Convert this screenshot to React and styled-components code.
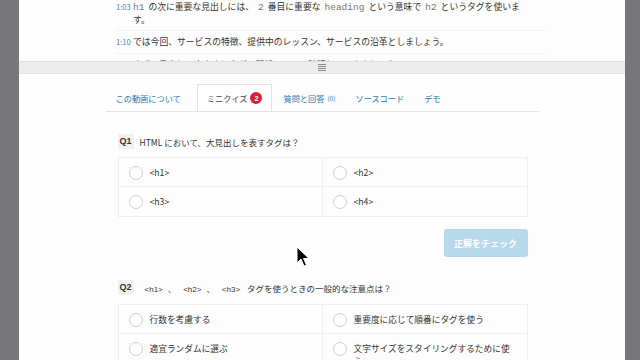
import React from 'react'
import styled, { createGlobalStyle } from 'styled-components'

const Global = createGlobalStyle`
  html, body { margin: 0; padding: 0; }
  body {
    background: #77777a;
    font-family: "Noto Sans CJK JP", "Noto Sans", sans-serif;
    color: #333;
    overflow: hidden;
  }
`

const Panel = styled.div`
  position: relative;
  margin: 0 15px 0 19px;
  height: 360px;
  background: #fdfdfd;
  overflow: hidden;
`

const Transcript = styled.ul`
  list-style: none;
  margin: 0;
  padding: 0 0 0 97px;
  height: 61px;
  overflow: hidden;
`

const Line = styled.li`
  display: flex;
  width: 430px;
  padding: 5px 0;
  margin-top: ${p => (p.$first ? '-4px' : '0')};
  border-bottom: 1px solid #f3f3f3;
  font-size: 8.8px;
  line-height: 11.5px;
  color: #333;
`

const Stamp = styled.span`
  flex: 0 0 17px;
  font-size: 7.5px;
  color: #3a84bd;
`

const Body = styled.span`
  width: 394px;
`

const Code = styled.code`
  font-family: "Liberation Mono", monospace;
  font-size: 9.5px;
  line-height: 11.5px;
  color: #777;
  margin: 0 ${p => (p.$tight ? '4px 0 0' : '4px')};
`

const Splitter = styled.div`
  height: 11px;
  background: #ececec;
  border-top: 1px solid #dedede;
  border-bottom: 1px solid #e4e4e4;
  display: flex;
  align-items: center;
  justify-content: center;
`

const Content = styled.div`
  width: 433px;
  margin: 10px auto 0;
`

const Tabs = styled.div`
  display: flex;
  border-bottom: 1px solid #e2e2e2;
  height: 27px;
`

const Tab = styled.div`
  display: flex;
  align-items: center;
  gap: 3px;
  padding: 0 9px;
  font-size: 8.2px;
  color: ${p => (p.$active ? '#444' : '#2a78b5')};
  background: ${p => (p.$active ? '#fff' : 'transparent')};
  border: 1px solid ${p => (p.$active ? '#e2e2e2' : 'transparent')};
  border-bottom: none;
  margin-bottom: -1px;
  height: 27px;
  box-sizing: border-box;
  margin-left: ${p => (p.$active ? '6px' : '0')};
  margin-right: ${p => (p.$active ? '1px' : '0')};
`

const Badge = styled.span`
  display: inline-flex;
  align-items: center;
  justify-content: center;
  width: 12px;
  height: 12px;
  border-radius: 50%;
  background: #d72236;
  color: #fff;
  font-size: 7.5px;
  font-weight: bold;
  font-family: "Liberation Sans", sans-serif;
`

const Count = styled.small`
  font-size: 6.5px;
`

const Quiz = styled.div`
  padding: 0 11px 0 12px;
`

const Question = styled.div`
  display: flex;
  align-items: center;
  gap: 6px;
  margin-top: ${p => p.$top};
  font-size: 8.5px;
  color: #333;
`

const QLabel = styled.span`
  background: #f0f0f0;
  font-family: "Liberation Sans", sans-serif;
  font-weight: bold;
  font-size: 9px;
  padding: 2px 2px;
  line-height: 11px;
`

const Tag = styled.span`
  font-family: "Liberation Sans", sans-serif;
  font-size: 8px;
  margin: 0 5px;
`

const Options = styled.div`
  display: grid;
  grid-template-columns: 1fr 1fr;
  margin-top: ${p => p.$top || '8px'};
  border: 1px solid #eeeeee;
`

const Option = styled.div`
  display: flex;
  align-items: flex-start;
  gap: 7px;
  height: 29px;
  box-sizing: border-box;
  padding: 8px 15px 0 10px;
  font-size: 8.7px;
  line-height: 13px;
  color: #333;
  border-right: ${p => (p.$col === 0 ? '1px solid #eeeeee' : 'none')};
  border-bottom: ${p => (p.$row === 0 ? '1px solid #eeeeee' : 'none')};
`

const Radio = styled.span`
  flex: 0 0 auto;
  width: 12px;
  height: 12px;
  border: 1px solid #cfcfcf;
  border-radius: 50%;
  background: #fff;
`

const Actions = styled.div`
  display: flex;
  justify-content: flex-end;
  margin-top: 12px;
`

const CheckButton = styled.button`
  width: 84px;
  height: 28px;
  border: none;
  border-radius: 3px;
  background: #b8d8eb;
  color: #fff;
  font-family: "Noto Sans CJK JP", sans-serif;
  font-weight: bold;
  font-size: 9px;
`

const Cursor = styled.svg`
  position: absolute;
  left: 277px;
  top: 246px;
`

const Grip = () => (
  <svg width="8" height="8" viewBox="0 0 8 8">
    <path d="M0 0.5h8M0 2.5h8M0 4.5h8M0 6.5h8" stroke="#8a8a8a" strokeWidth="1" />
  </svg>
)

const q1 = ['<h1>', '<h2>', '<h3>', '<h4>']
const q2 = [
  '行数を考慮する',
  '重要度に応じて順番にタグを使う',
  '適宜ランダムに選ぶ',
  '文字サイズをスタイリングするために使う'
]

const OptionGrid = ({ items, top }) => (
  <Options $top={top}>
    {items.map((t, i) => (
      <Option key={i} $col={i % 2} $row={Math.floor(i / 2)}>
        <Radio />
        <span>{t}</span>
      </Option>
    ))}
  </Options>
)

export default function App () {
  return (
    <>
      <Global />
      <Panel>
        <Transcript>
          <Line $first>
            <Stamp>1:03</Stamp>
            <Body>
              <Code $tight>h1</Code>の次に重要な見出しには、<Code>2</Code>番目に重要な<Code>heading</Code>という意味で<Code>h2</Code>というタグを使います。
            </Body>
          </Line>
          <Line>
            <Stamp>1:10</Stamp>
            <Body>では今回、サービスの特徴、提供中のレッスン、サービスの沿革としましょう。</Body>
          </Line>
          <Line>
            <Stamp>1:23</Stamp>
            <Body>まず、見出しの大きさとタグの関係について確認していきましょう。</Body>
          </Line>
        </Transcript>
        <Splitter><Grip /></Splitter>
        <Content>
          <Tabs>
            <Tab>この動画について</Tab>
            <Tab $active>ミニクイズ <Badge>2</Badge></Tab>
            <Tab>質問と回答 <Count>(0)</Count></Tab>
            <Tab>ソースコード</Tab>
            <Tab>デモ</Tab>
          </Tabs>
          <Quiz>
            <Question $top="22px">
              <QLabel>Q1</QLabel>
              <span>HTML において、大見出しを表すタグは？</span>
            </Question>
            <OptionGrid items={q1} />
            <Actions>
              <CheckButton>正解をチェック</CheckButton>
            </Actions>
            <Question $top="23px">
              <QLabel>Q2</QLabel>
              <span>
                <Tag>&lt;h1&gt;</Tag>、 <Tag>&lt;h2&gt;</Tag>、 <Tag>&lt;h3&gt;</Tag> タグを使うときの一般的な注意点は？
              </span>
            </Question>
            <OptionGrid items={q2} top="9px" />
          </Quiz>
        </Content>
        <Cursor width="14" height="22" viewBox="0 0 14 22">
          <path d="M1 1 L1 17 L5 13 L8 20 L10.5 19 L7.5 12.5 L13 12.5 Z" fill="#000" stroke="#fff" strokeWidth="1" />
        </Cursor>
      </Panel>
    </>
  )
}
